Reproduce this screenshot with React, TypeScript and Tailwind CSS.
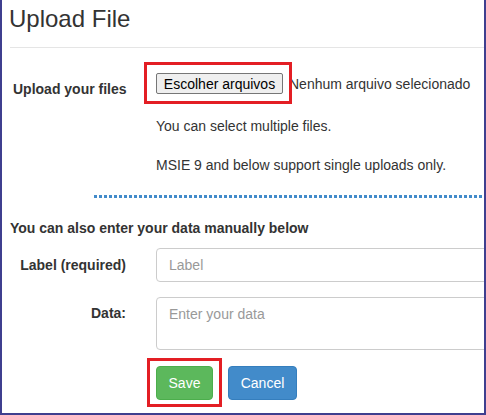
import React from 'react';

const font = { fontFamily: '"Liberation Sans", Arial, Helvetica, sans-serif' };

/** Upload form with two annotation boxes drawn over it. */
export default function App(): React.ReactElement {
  return (
    <div
      style={font}
      className="relative h-[415px] w-[486px] overflow-hidden border-b-2 border-l-2 border-r-2 border-[#3f3f8f] bg-white text-[14px] leading-[20px] text-[#333]"
    >
      <h3 className="ml-[7px] mt-[6px] text-[24px] font-normal leading-[26px]">Upload File</h3>
      <div className="ml-[8px] mt-[15px] h-px bg-[#e5e5e5]" />

      {/* file row */}
      <div className="mt-[25px] flex h-[21px] items-start">
        <div className="w-[154px] shrink-0 pl-[11px] pt-[6px] font-bold">Upload your files</div>
        <div className="flex items-center whitespace-nowrap">
          <span className="flex h-[21px] w-[127px] items-center justify-center rounded-[2px] border border-[#767676] bg-[#efefef] text-black">
            Escolher arquivos
          </span>
          <span className="ml-[6px]">Nenhum arquivo selecionado</span>
        </div>
      </div>

      <p className="ml-[154px] mt-[22px]">You can select multiple files.</p>
      <p className="ml-[154px] mt-[19px]">MSIE 9 and below support single uploads only.</p>

      <div className="ml-[92px] mt-[20px] h-[3px] bg-[repeating-linear-gradient(90deg,#428bca_0_3px,transparent_3px_5px)]" />

      <p className="ml-[8px] mt-[20px] font-bold">You can also enter your data manually below</p>

      <div className="mt-[10px] flex items-center">
        <div className="w-[124px] shrink-0 text-right font-bold">Label (required)</div>
        <div className="ml-[30px] flex h-[34px] w-[340px] shrink-0 items-center rounded-[4px] border border-[#ccc] px-[12px] text-[#999]">
          Label
        </div>
      </div>

      <div className="mt-[15px] flex items-start">
        <div className="w-[124px] shrink-0 pt-[6px] text-right font-bold">Data:</div>
        <div className="ml-[30px] h-[53px] w-[340px] shrink-0 rounded-[4px] border border-[#ccc] px-[12px] py-[6px] text-[#999]">
          Enter your data
        </div>
      </div>

      <div className="ml-[154px] mt-[16px] flex gap-[15px]">
        <span className="flex h-[34px] w-[57px] items-center justify-center rounded-[4px] border border-[#4cae4c] bg-[#5cb85c] text-white">
          Save
        </span>
        <span className="flex h-[34px] w-[69px] items-center justify-center rounded-[4px] border border-[#357ebd] bg-[#428bca] text-white">
          Cancel
        </span>
      </div>

      {/* annotation boxes */}
      <div className="absolute left-[142px] top-[62px] h-[42px] w-[148px] border-[3px] border-[#e31e24]" />
      <div className="absolute left-[145px] top-[358px] h-[49px] w-[75px] border-[3px] border-[#e31e24]" />
    </div>
  );
}
